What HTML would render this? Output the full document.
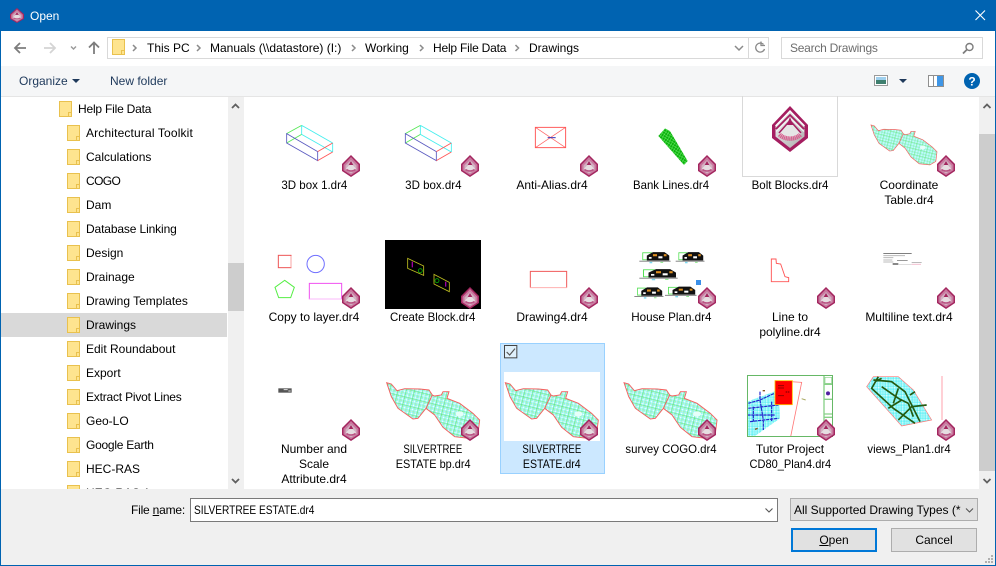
<!DOCTYPE html>
<html><head><meta charset="utf-8"><title>Open</title>
<style>
html,body{margin:0;padding:0}
body{width:996px;height:566px;overflow:hidden;position:relative;background:#fff;font:12px/15px "Liberation Sans",sans-serif;color:#000}
div{position:absolute;box-sizing:border-box}
.t{white-space:nowrap;line-height:16px;height:16px}
.f{white-space:nowrap;line-height:16px;height:16px}
.c{width:118px;text-align:center;line-height:15px;white-space:nowrap}
.c span{display:inline-block}
svg{position:absolute;left:0;top:0}
u{text-decoration:underline}
</style></head><body>
<div style="left:0;top:0;width:996px;height:31px;background:#0063b1"></div>
<div class="t" style="left:30px;top:8px;color:#fff">Open</div>
<div style="left:0;top:31px;width:1px;height:535px;background:#0063b1"></div>
<div style="left:995px;top:31px;width:1px;height:535px;background:#0063b1"></div>
<div style="left:0;top:565px;width:996px;height:1px;background:#0063b1"></div>

<div style="left:107px;top:37px;width:662px;height:22px;border:1px solid #d9d9d9"></div>
<div style="left:748px;top:37px;width:1px;height:22px;background:#d9d9d9"></div>
<div class="t" style="left:147px;top:40px">This PC</div>
<div class="t" style="left:210px;top:40px">Manuals (\\datastore) (I:)</div>
<div class="t" style="left:365px;top:40px">Working</div>
<div class="t" style="left:433px;top:40px;letter-spacing:-.2px">Help File Data</div>
<div class="t" style="left:529px;top:40px">Drawings</div>
<div style="left:781px;top:37px;width:202px;height:22px;border:1px solid #d9d9d9"></div>
<div class="t" style="left:790px;top:40px;color:#6d6d6d;letter-spacing:-.25px">Search Drawings</div>

<div style="left:1px;top:66px;width:994px;height:31px;background:#f5f6f7;border-bottom:1px solid #e5e5e5"></div>
<div class="t" style="left:19px;top:73px;color:#1e395b">Organize</div>
<div class="t" style="left:110px;top:73px;color:#1e395b">New folder</div>

<div style="left:1px;top:97px;width:244px;height:392px;overflow:hidden">
  <div style="left:0;top:216px;width:226px;height:24px;background:#d9d9d9"></div>
  <div class="t" style="left:77px;top:4px;letter-spacing:-.2px">Help File Data</div>
  <div class="f" style="left:85px;top:28px;letter-spacing:.15px">Architectural Toolkit</div>
  <div class="f" style="left:85px;top:52px">Calculations</div>
  <div class="f" style="left:85px;top:76px;letter-spacing:-.6px">COGO</div>
  <div class="f" style="left:85px;top:100px">Dam</div>
  <div class="f" style="left:85px;top:124px;letter-spacing:-.13px">Database Linking</div>
  <div class="f" style="left:85px;top:148px">Design</div>
  <div class="f" style="left:85px;top:172px">Drainage</div>
  <div class="f" style="left:85px;top:196px">Drawing Templates</div>
  <div class="f" style="left:85px;top:220px">Drawings</div>
  <div class="f" style="left:85px;top:244px">Edit Roundabout</div>
  <div class="f" style="left:85px;top:268px">Export</div>
  <div class="f" style="left:85px;top:292px;letter-spacing:-.2px">Extract Pivot Lines</div>
  <div class="f" style="left:85px;top:316px">Geo-LO</div>
  <div class="f" style="left:85px;top:340px;letter-spacing:-.25px">Google Earth</div>
  <div class="f" style="left:85px;top:364px">HEC-RAS</div>
  <div class="f" style="left:85px;top:388px">HEC-RAS 1</div>
  <div style="left:227px;top:0;width:16px;height:392px;background:#f0f0f0"></div>
  <div style="left:227px;top:166px;width:16px;height:48px;background:#cdcdcd"></div>
</div>
<div style="left:979px;top:97px;width:16px;height:392px;background:#f0f0f0"></div>
<div style="left:979px;top:134px;width:16px;height:337px;background:#cdcdcd"></div>

<div style="left:742px;top:96px;width:96px;height:81px;border:1px solid #d9d9d9;border-top:0"></div>
<div style="left:500px;top:343px;width:105px;height:131px;background:#cce8ff;border:1px solid #99d1ff"></div>
<div style="left:504px;top:372px;width:96px;height:69px;background:#fff"></div>
<div style="left:385px;top:240px;width:96px;height:69px;background:#000"></div>

<div class="c" style="left:255px;top:178px"><span style="transform:scaleX(.96)">3D box 1.dr4</span></div>
<div class="c" style="left:374px;top:178px"><span style="transform:scaleX(.96)">3D box.dr4</span></div>
<div class="c" style="left:493px;top:178px">Anti-Alias.dr4</div>
<div class="c" style="left:612px;top:178px"><span style="transform:scaleX(.95)">Bank Lines.dr4</span></div>
<div class="c" style="left:731px;top:178px"><span style="transform:scaleX(.96)">Bolt Blocks.dr4</span></div>
<div class="c" style="left:850px;top:178px">Coordinate<br>Table.dr4</div>
<div class="c" style="left:255px;top:310px">Copy to layer.dr4</div>
<div class="c" style="left:374px;top:310px"><span style="transform:scaleX(.955)">Create Block.dr4</span></div>
<div class="c" style="left:493px;top:310px">Drawing4.dr4</div>
<div class="c" style="left:612px;top:310px"><span style="transform:scaleX(.97)">House Plan.dr4</span></div>
<div class="c" style="left:731px;top:310px">Line to<br>polyline.dr4</div>
<div class="c" style="left:850px;top:310px">Multiline text.dr4</div>
<div class="c" style="left:255px;top:442px">Number and<br>Scale<br>Attribute.dr4</div>
<div class="c" style="left:374px;top:442px"><span style="transform:scaleX(.8)">SILVERTREE</span><br><span style="transform:scaleX(.91)">ESTATE bp.dr4</span></div>
<div class="c" style="left:493px;top:442px"><span style="transform:scaleX(.8)">SILVERTREE</span><br><span style="transform:scaleX(.88)">ESTATE.dr4</span></div>
<div class="c" style="left:612px;top:442px"><span style="transform:scaleX(.95)">survey COGO.dr4</span></div>
<div class="c" style="left:731px;top:442px">Tutor Project<br><span style="transform:scaleX(.92)">CD80_Plan4.dr4</span></div>
<div class="c" style="left:850px;top:442px"><span style="transform:scaleX(.945)">views_Plan1.dr4</span></div>

<div style="left:1px;top:489px;width:994px;height:76px;background:#f0f0f0"></div>
<div class="t" style="left:131px;top:502px;letter-spacing:-.2px">File <u>n</u>ame:</div>
<div style="left:190px;top:498px;width:588px;height:24px;background:#fff;border:1px solid #7a7a7a"></div>
<div class="t" style="left:194px;top:502px;transform:scaleX(.845);transform-origin:0 0">SILVERTREE ESTATE.dr4</div>
<div style="left:790px;top:498px;width:188px;height:23px;background:#e1e1e1;border:1px solid #adadad"></div>
<div class="t" style="left:794px;top:502px">All Supported Drawing Types (*</div>
<div style="left:791px;top:528px;width:86px;height:24px;background:#e1e1e1;border:2px solid #0078d7"></div>
<div class="t" style="left:791px;top:532px;width:86px;text-align:center"><u>O</u>pen</div>
<div style="left:891px;top:528px;width:86px;height:24px;background:#e1e1e1;border:1px solid #adadad"></div>
<div class="t" style="left:891px;top:532px;width:86px;text-align:center">Cancel</div>

<svg width="996" height="566" viewBox="0 0 996 566" xmlns="http://www.w3.org/2000/svg">
<defs>
<linearGradient id="g" x1="0" y1="0" x2="1" y2="1"><stop offset="0" stop-color="#f0f0f0"/><stop offset="1" stop-color="#aeaeae"/></linearGradient>
<symbol id="b" viewBox="0 0 36 46" preserveAspectRatio="none">
<polygon points="18,0 36,19 36,32 18,46 0,32 0,19" fill="#a51e60"/>
<polygon points="18,4 32.500,19.500 32.500,30.500 18,42 3.500,30.500 3.500,19.500" fill="url(#g)"/>
<polyline points="3.500,20 18,5 32.500,20" fill="none" stroke="#fff" stroke-width="1.300"/>
<polyline points="4,23 18,9 32,23" fill="none" stroke="#a51e60" stroke-width="1.800"/>
<polyline points="4,25.500 18,12 32,25.500" fill="none" stroke="#f4f4f4" stroke-width="1.200"/>
<path d="M6.500 27L18 15L29.500 27A14 11 0 0 1 6.500 27Z" fill="#e6e6e6"/>
<path d="M18 14.500L7 27M18 14.500L29 27" stroke="#a51e60" stroke-width="1.500"/>
<path d="M15 19L18 11L21 19Z" fill="#a51e60"/>
<path d="M7.500 28.500A13 10 0 0 0 28.500 28.500" fill="none" stroke="#d8608f" stroke-width="4.500" stroke-dasharray="1.300 .5"/>
</symbol>
<symbol id="s" viewBox="0 0 18 22" preserveAspectRatio="none">
<polygon points="9,0 18,9 18,16 9,22 0,16 0,9" fill="#a3265f"/>
<polygon points="9,2 16.500,9.700 16.500,15.300 9,20.300 1.500,15.300 1.500,9.700" fill="#c9789e"/>
<polygon points="9,5 14.500,10.500 14.500,15 9,18.500 3.500,15 3.500,10.500" fill="#d2b2c2"/>
<path d="M4 13.500L9 8.500L14 13.500A6 4.500 0 0 1 4 13.500Z" fill="#e6dde1"/>
<path d="M9 6L6.700 10H11.300Z" fill="#a3265f"/>
<path d="M4.500 14.500A5.500 3.500 0 0 0 13.500 14.500" fill="none" stroke="#bb5585" stroke-width="1.600"/>
</symbol>
<symbol id="fo" viewBox="0 0 13 16">
<rect x=".5" y=".5" width="12" height="15" fill="#fee48f" stroke="#e9c14e"/>
<path d="M9.500 15.500V11.500H12.500" fill="none" stroke="#e9c14e"/>
</symbol>
<pattern id="p" width="24" height="24" patternUnits="userSpaceOnUse" patternTransform="rotate(14)">
<rect width="24" height="24" fill="#fbfffe"/>
<path d="M0 4H24M0 10H24M0 16H24M0 22H24M4 0V24M10 0V24M16 0V24M22 0V24" stroke="#52f2f0" stroke-width="1.300"/>
<path d="M0 0V24M0 0H24M12 0V24M0 12H24" stroke="#55e060" stroke-width="1.700"/>
</pattern>
<pattern id="pc" width="8" height="8" patternUnits="userSpaceOnUse">
<rect width="8" height="8" fill="#eefffd"/><path d="M0 0H8M0 4H8M0 0V8M4 0V8" stroke="#25eaf2" stroke-width="1.500"/>
</pattern>
<pattern id="bl" width="8" height="8" patternUnits="userSpaceOnUse" patternTransform="rotate(30)">
<rect width="8" height="8" fill="#0cb00c"/><path d="M0 2H8M2 0V8" stroke="#60e860" stroke-width="1.600"/>
</pattern>
<g id="est">
<path d="M781 128L795 132L812 152L835 146L880 147L908 150L918 165L925 168L945 165L950 155L968 155L962 175L1000 190L1040 220L1060 240L1055 280L1030 295L985 290L950 262L925 225L899 205L875 235L860 237L815 205L795 170Z" fill="url(#p)" stroke="#f55f5f" stroke-width="2.800"/>
<path d="M899 205L918 165" stroke="#f55f5f" stroke-width="2.800"/>
<ellipse cx="1000" cy="222" rx="12" ry="8" fill="#e6fffa"/>
</g>
<g id="box" fill="none" stroke-width="2.600">
<path d="M125 113L170 88M125 141L170 115" stroke="#55e855"/>
<path d="M170 88L263 141M170 115L263 168M170 88V115M263 141V168" stroke="#44eeee"/>
<path d="M125 113L218 167V194L125 141Z" stroke="#5a5ac0"/>
<path d="M218 167L263 141M218 194L263 168" stroke="#f55"/>
</g>
<g id="h">
<path d="M0 30H92" stroke="#777" stroke-width="2.500"/>
<rect x="10" y="6" width="26" height="20" fill="none" stroke="#55e055" stroke-width="2.500"/>
<path d="M22 28V14L40 4H74L88 14V28Z" fill="#111"/>
<rect x="40" y="10" width="12" height="6" fill="#e09020"/><rect x="56" y="16" width="12" height="6" fill="#fff"/><rect x="72" y="10" width="8" height="6" fill="#e09020"/><rect x="28" y="18" width="8" height="5" fill="#fff"/>
<rect x="30" y="32" width="8" height="4" fill="#7ad8f0"/><rect x="62" y="32" width="8" height="3" fill="#8ee88e"/>
</g>
</defs>

<!-- title/nav icons -->
<use href="#s" x="10" y="8" width="14" height="15"/>
<path d="M975.500 10.500L985 20M985 10.500L975.500 20" stroke="#fff" stroke-width="1.100"/>
<path d="M26 48H15M20 43L15 48L20 53" fill="none" stroke="#7d7d7d" stroke-width="1.800"/>
<path d="M44 48H55M50 43L55 48L50 53" fill="none" stroke="#d4d4d4" stroke-width="1.800"/>
<path d="M71 46.500L73.500 49L76 46.500" fill="none" stroke="#999" stroke-width="1.400"/>
<path d="M94 54V43M89 47.500L94 42.500L99 47.500" fill="none" stroke="#7d7d7d" stroke-width="1.800"/>
<use href="#fo" x="112" y="39" width="13" height="16"/>
<g fill="none" stroke="#8a8a8a" stroke-width="1.500"><path d="M133 45L136 48L133 51M197 45L200 48L197 51M352 45L355 48L352 51M420 45L423 48L420 51M515.500 45L518.500 48L515.500 51"/></g>
<path d="M735 46L739 50L743 46" fill="none" stroke="#8a8a8a" stroke-width="1.500"/>
<path d="M763.500 44.500A4.500 4.500 0 1 0 764.500 49" fill="none" stroke="#8a8a8a" stroke-width="1.300"/><path d="M761 41.500V45.500H765" fill="none" stroke="#8a8a8a" stroke-width="1.300"/>
<circle cx="969.500" cy="47" r="3.500" fill="none" stroke="#7d7d7d" stroke-width="1.400"/><path d="M967 49.500L963 53.500" stroke="#7d7d7d" stroke-width="1.800"/>

<!-- toolbar icons -->
<polygon points="72,79 80,79 76,83" fill="#1e395b"/>
<rect x="874.500" y="75.500" width="13" height="10" fill="#fff" stroke="#9a9a9a"/>
<rect x="876" y="77" width="10" height="3" fill="#9fd0ee"/><rect x="876" y="80" width="10" height="4" fill="#3f7f6f"/>
<polygon points="899,79 907,79 903,83" fill="#1e395b"/>
<rect x="928.500" y="75.500" width="15" height="11" fill="#fff" stroke="#8f8f8f"/><rect x="937" y="76" width="6" height="10" fill="#3f96e6"/><path d="M933.500 76V86" stroke="#8f8f8f"/>
<circle cx="972" cy="81" r="8" fill="#0063b1"/>
<text x="972" y="85.500" text-anchor="middle" fill="#fff" style="font:bold 12px 'Liberation Sans',sans-serif">?</text>

<!-- left folders -->
<use href="#fo" x="59" y="101" width="13" height="16"/>
<use href="#fo" x="67" y="125" width="13" height="16"/><use href="#fo" x="67" y="149" width="13" height="16"/>
<use href="#fo" x="67" y="173" width="13" height="16"/><use href="#fo" x="67" y="197" width="13" height="16"/>
<use href="#fo" x="67" y="221" width="13" height="16"/><use href="#fo" x="67" y="245" width="13" height="16"/>
<use href="#fo" x="67" y="269" width="13" height="16"/><use href="#fo" x="67" y="293" width="13" height="16"/>
<use href="#fo" x="67" y="317" width="13" height="16"/><use href="#fo" x="67" y="341" width="13" height="16"/>
<use href="#fo" x="67" y="365" width="13" height="16"/><use href="#fo" x="67" y="389" width="13" height="16"/>
<use href="#fo" x="67" y="413" width="13" height="16"/><use href="#fo" x="67" y="437" width="13" height="16"/>
<use href="#fo" x="67" y="461" width="13" height="16"/>
<svg x="60" y="480" width="30" height="9"><use href="#fo" x="7" y="5" width="13" height="16"/></svg>
<path d="M232 108L235.500 104.500L239 108M232 479L235.500 482.500L239 479" fill="none" stroke="#606060" stroke-width="1.800"/>
<path d="M983.500 108L987 104.500L990.500 108M983.500 479L987 482.500L990.500 479" fill="none" stroke="#606060" stroke-width="1.800"/>

<!-- row 1 -->
<g transform="translate(245,96) scale(.33333)"><use href="#box"/><use href="#box" x="356"/>
<g fill="none"><rect x="871" y="94" width="91" height="61" stroke="#f44" stroke-width="2.600"/><path d="M871 94L962 155M962 94L871 155" stroke="#f66" stroke-width="2.200"/><path d="M908 125H932" stroke="#3333bb" stroke-width="3"/></g></g>
<g transform="translate(615,96) scale(.33333)">
<polygon points="150,97 165,105 218,195 207,207 130,120" fill="url(#bl)"/>
</g>
<use href="#b" x="772" y="106" width="36" height="46"/>
<use href="#est" transform="translate(686.2,94.3) scale(.2366,.2395)"/>

<!-- row 2 -->
<g transform="translate(245,230) scale(.33333)" fill="none">
<rect x="100" y="76" width="38" height="37" stroke="#ee5555" stroke-width="3"/><path d="M138 78V113" stroke="#fcc" stroke-width="2"/>
<circle cx="212" cy="102" r="26" stroke="#7070ff" stroke-width="3"/>
<polygon points="119,151 148,172 137,203 101,203 90,172" stroke="#55ee44" stroke-width="3"/>
<path d="M193 208V160H290V208" stroke="#f050f0" stroke-width="3"/><path d="M193 207H290" stroke="#fbb8fb" stroke-width="3"/>
<g stroke="#c0c020" stroke-width="2.500"><polygon points="488,85 536,108 536,136 488,115"/><polygon points="567,133 613,157 613,185 567,162"/></g>
<g stroke="#a000a0" stroke-width="4"><path d="M502 95V112M602 155V170"/></g>
<g stroke="#00b000" stroke-width="2.500"><circle cx="526" cy="122" r="6"/><circle cx="576" cy="152" r="6"/></g>
<path d="M856 173V124H965V173" stroke="#f05a5a" stroke-width="3"/><path d="M856 173H965" stroke="#ffb0b0" stroke-width="3"/>
</g>
<g transform="translate(615,230) scale(.33333)">
<use href="#h" transform="translate(73,62) scale(1.02,1.05)"/>
<use href="#h" transform="translate(182,62) scale(.94,1.05)"/>
<use href="#h" transform="translate(73,113) scale(1.25,1.05)"/>
<use href="#h" transform="translate(58,168) scale(.95,1.05)"/>
<use href="#h" transform="translate(150,166) scale(1.03,1)"/>
<rect x="243" y="150" width="15" height="15" fill="#3a8fe8"/>
<polygon points="469,87 483,87 484,100 497,102 510,140 521,143 521,155 469,155" fill="none" stroke="#f55" stroke-width="2.800"/>
<path d="M805 71H890" stroke="#333" stroke-width="2"/><path d="M805 77H870M805 83H835M805 90H832M805 96H835" stroke="#bbb" stroke-width="3"/><path d="M846 91H878" stroke="#666" stroke-width="2"/><path d="M890 98H920" stroke="#999" stroke-width="2"/><path d="M833 102H850" stroke="#111" stroke-width="3"/><path d="M850 103H890" stroke="#ccc" stroke-width="2"/><path d="M890 103H918" stroke="#f3c0d0" stroke-width="3"/>
</g>

<!-- row 3 -->
<g transform="translate(245,340) scale(.33333)">
<rect x="100" y="145" width="40" height="13" fill="#555"/><path d="M116 149H128M130 153H137" stroke="#ddd" stroke-width="3"/>
<use href="#est" x="-356"/>
<use href="#est"/>
<rect x="778.500" y="16.500" width="37" height="37" fill="#dff0fb" stroke="#444" stroke-width="3"/>
<path d="M785 36L794 45L810 26" fill="none" stroke="#555" stroke-width="3.500"/>
</g>
<g transform="translate(363.700,340) scale(.33333)"><use href="#est"/></g>
<g transform="translate(615,340) scale(.33333)">
<polygon points="397,185 490,150 495,235 420,288 397,288" fill="url(#pc)"/>
<g fill="none" stroke="#2222cc" stroke-width="3.500" stroke-dasharray="10 2"><path d="M400 190L435 180L478 160M400 205L490 195M405 245L490 235M435 155V180L445 240V270M415 200V245M470 185V245M397 225H480"/></g>
<path d="M480 122L560 127L527 290" fill="none" stroke="#f77" stroke-width="2.500"/>
<rect x="480" y="122" width="52" height="72" fill="#f00" stroke="#ffc000" stroke-width="2.500"/>
<path d="M490 137H507M490 144H507M490 167H507M512 156H525" stroke="#600" stroke-width="3" stroke-dasharray="4 2"/>
<path d="M560 176L572 180" stroke="#a8a860" stroke-width="3"/>
<path d="M443 152L450 152M420 268L428 265" stroke="#885522" stroke-width="4"/>
<rect x="627" y="106" width="26" height="184" fill="#fff"/>
<path d="M627 108V290M627 133H653M627 178H653M627 222H653M627 232H653" fill="none" stroke="#88d088" stroke-width="4"/>
<path d="M630 112H650V130H630Z" fill="none" stroke="#88d088" stroke-width="2"/>
<circle cx="639" cy="160" r="6" fill="#5020a0"/>
<rect x="397.500" y="106.500" width="255" height="183" fill="none" stroke="#66b866" stroke-width="3"/>
<polygon points="775,110 850,110 895,150 950,240 860,258 755,140" fill="url(#pc)" stroke="#f77" stroke-width="2"/>
<g fill="none" stroke="#245a10" stroke-width="5"><path d="M775 120L830 125L870 155L915 245M790 110L770 145L835 205L900 250M800 140L850 175L880 190M850 145L835 190M850 240L890 200L935 195M880 190L895 230M820 205L860 180M780 125L800 115M885 165L900 155"/></g>
<path d="M981 108V240" stroke="#ffb8c0" stroke-width="4"/>
</g>

<!-- badges -->
<g>
<use href="#s" x="342" y="155" width="18" height="22"/><use href="#s" x="461" y="155" width="18" height="22"/><use href="#s" x="580" y="155" width="18" height="22"/><use href="#s" x="698" y="155" width="18" height="22"/><use href="#s" x="937" y="155" width="18" height="22"/>
<use href="#s" x="342" y="287" width="18" height="22"/><use href="#s" x="461" y="287" width="18" height="22"/><use href="#s" x="580" y="287" width="18" height="22"/><use href="#s" x="698" y="287" width="18" height="22"/><use href="#s" x="817" y="287" width="18" height="22"/><use href="#s" x="937" y="287" width="18" height="22"/>
<use href="#s" x="342" y="419" width="18" height="22"/><use href="#s" x="461" y="419" width="18" height="22"/><use href="#s" x="580" y="419" width="18" height="22"/><use href="#s" x="698" y="419" width="18" height="22"/><use href="#s" x="817" y="419" width="18" height="22"/><use href="#s" x="937" y="419" width="18" height="22"/>
</g>

<!-- bottom -->
<path d="M765.500 508.500L769 512L772.500 508.500M966 508.500L969.500 512L973 508.500" fill="none" stroke="#555" stroke-width="1.100"/>
<g fill="#b0b0b0"><rect x="991" y="555" width="2" height="2"/><rect x="991" y="558" width="2" height="2"/><rect x="991" y="561" width="2" height="2"/><rect x="988" y="558" width="2" height="2"/><rect x="988" y="561" width="2" height="2"/><rect x="985" y="561" width="2" height="2"/></g>
</svg>
</body></html>
